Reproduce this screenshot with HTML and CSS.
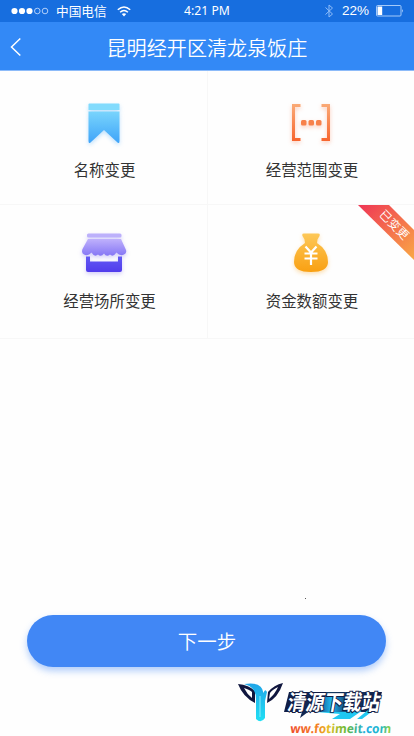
FILE: index.html
```html
<!DOCTYPE html>
<html lang="zh-CN">
<head>
<meta charset="utf-8">
<meta name="viewport" content="width=device-width, initial-scale=1">
<title>昆明经开区清龙泉饭庄</title>
<link rel="stylesheet" href="styles.css">
</head>
<body>
<div class="screen">
  <div class="status">
    <div class="status-left">
      <svg class="signal" width="38" height="8" viewBox="0 0 38 8"><g fill="#fff"><circle cx="3.5" cy="4" r="3.1"/><circle cx="11" cy="4" r="3.1"/><circle cx="18.5" cy="4" r="3.1"/></g><g fill="none" stroke="#d5e6ff" stroke-width=".8"><circle cx="26.3" cy="4" r="2.8"/><circle cx="34" cy="4" r="2.8"/></g></svg>
      <span class="carrier">中国电信</span>
      <svg width="14" height="11" viewBox="0 0 14 11" fill="none" stroke="#fff" stroke-width="1.5"><path d="M.8 3.8Q7-1.900 13.2 3.8M3.1 6.3Q7 2.800 10.9 6.3"/><path d="M4.8 8.1Q7 6.5 9.2 8.1L7 10.5Z" fill="#fff" stroke="none"/></svg>
    </div>
    <span class="time">4:21 PM</span>
    <div class="status-right">
      <svg width="8" height="14" viewBox="0 0 8 14" fill="none" stroke="#8fbcf8" stroke-width="1"><path d="M.5 3.5l7 6.500L4 13V1l3.500 3-7 6.500"/></svg>
      <span class="percent">22%</span>
      <svg width="28" height="12" viewBox="0 0 28 12"><rect x=".5" y=".5" width="24.500" height="10.500" rx="1" fill="none" stroke="#a4cafa"/><path d="M1.500 1.500h4.700v8.500H1.500z" fill="#fff"/><path d="M26 4q1.600 1.700 0 3.700z" fill="#d5e6ff"/></svg>
    </div>
  </div>
  <header class="header">
    <svg class="back" width="12" height="20" viewBox="0 0 12 20" fill="none" stroke="#fff" stroke-width="1.500"><path d="M10.300 1.500L1.500 10l8.800 8.500"/></svg>
    <h1>昆明经开区清龙泉饭庄</h1>
  </header>
  <main class="grid">
    <div class="cell">
      <svg class="icon blue" width="48" height="48" viewBox="0 0 48 48"><defs><linearGradient id="blue" x2="0" y2="1"><stop stop-color="#79d4fc"/><stop offset="1" stop-color="#3fa4f9"/></linearGradient></defs><path d="M9.500 3.500h29q1 0 1 1v5.500h-31V4.500q0-1 1-1z" fill="#82dbfd"/><path d="M8.500 11.500h31v29.500q0 3-2 1.500L24 30 10.500 42.500q-2 1.500-2-1.500z" fill="url(#blue)"/></svg>
      <span class="label">名称变更</span>
    </div>
    <div class="cell right">
      <svg class="icon orange" width="48" height="48" viewBox="0 0 48 48"><defs><linearGradient id="orange" gradientUnits="userSpaceOnUse" x1="0" y1="4" x2="0" y2="42"><stop stop-color="#faaa76"/><stop offset="1" stop-color="#f7642d"/></linearGradient></defs><path d="M13.500 5.500H6.500v34h7M34.500 5.500h7v34h-7" fill="none" stroke="url(#orange)" stroke-width="3"/><g fill="#f7814b"><rect x="14" y="20" width="5.500" height="5.500" rx="1.500"/><rect x="21.500" y="20" width="5.500" height="5.500" rx="1.500"/><rect x="29" y="20" width="5.500" height="5.500" rx="1.500"/></g></svg>
      <span class="label">经营范围变更</span>
    </div>
    <div class="cell lower place">
      <svg class="icon purple" width="48" height="48" viewBox="0 0 48 48"><defs><linearGradient id="violet" x2="0" y2="1"><stop stop-color="#bfb1fc"/><stop offset="1" stop-color="#8576f5"/></linearGradient><linearGradient id="indigo" x2="0" y2="1"><stop stop-color="#6259f4"/><stop offset="1" stop-color="#513cec"/></linearGradient></defs><rect x="7" y="2.500" width="34.500" height="4" rx="1.500" fill="#bcb0fb"/><path d="M8 8h33l5 11q1 3-2 4.500-4 2-7.500-2-3.500 5-6.500 2-3.500 3-6-1-3 4-6 1-3.500 3-6.500-2-3.500 4-7.500 2Q1 22 2.500 18z" fill="url(#violet)"/><path d="M6 25.500h4v5h28v-5h4v13.500q0 2-2 2H8q-2 0-2-2z" fill="url(#indigo)"/></svg>
      <span class="label">经营场所变更</span>
    </div>
    <div class="cell right lower">
      <svg class="icon gold" width="48" height="48" viewBox="0 0 48 48"><defs><linearGradient id="gold" x2="0" y2="1"><stop stop-color="#fdc858"/><stop offset="1" stop-color="#f9a012"/></linearGradient></defs><path d="M17 2.500h14q2.500 0 1.500 2.500L30.500 8.500 30 12Q41 19 41 31 41 41 24 41T7 31Q7 19 18 12L17.500 8.500 15.500 5Q14.500 2.500 17 2.500z" fill="url(#gold)"/><path d="M18.500 15.500l5.500 6 5.500-6M17.500 22.500h13M17.500 27.500h13M24 21v13" fill="none" stroke="#fff" stroke-width="2.200"/></svg>
      <span class="label">资金数额变更</span>
      <svg class="ribbon" width="56" height="56" viewBox="0 0 56 56"><defs><linearGradient id="ribbon" x2="1" y2="1"><stop stop-color="#ef3655"/><stop offset="1" stop-color="#f9a845"/></linearGradient></defs><path d="M0 0h31l25 25v30z" fill="url(#ribbon)"/><text transform="translate(36.500 19.500) rotate(45)" text-anchor="middle" y="4.500" fill="#fff">已变更</text></svg>
    </div>
  </main>
  <i class="speck"></i>
  <button class="next">下一步</button>
  <svg class="watermark" width="184" height="66" viewBox="0 0 184 66"><defs><linearGradient id="rainbow"><stop stop-color="#ef4c2b"/><stop offset=".25" stop-color="#f47b25"/><stop offset=".38" stop-color="#e5bd24"/><stop offset=".55" stop-color="#68ba36"/><stop offset=".75" stop-color="#20ade4"/><stop offset=".9" stop-color="#22b8c5"/><stop offset="1" stop-color="#a5d62d"/></linearGradient><linearGradient id="cyan" x2="0" y2="1"><stop stop-color="#20a5e8"/><stop offset="1" stop-color="#20e0f4"/></linearGradient><linearGradient id="plate"><stop stop-color="#101c44"/><stop offset=".3" stop-color="#102b58"/><stop offset=".48" stop-color="#20b5ef"/><stop offset=".65" stop-color="#123a68"/><stop offset="1" stop-color="#101c44"/></linearGradient></defs>
    <path d="M8 14Q19 15 25 21V33Q13 27 8 14zM53 13Q44 15 38 22L37 33Q48 28 53 13z" fill="#10163e"/>
    <path d="M14 18q6 2 8 4v6q-5-4-8-10zM48 17q-6 3-8 6l-1 6q6-5 9-12z" fill="#fff"/>
    <path d="M14 14Q32 11 33.500 23q1.500-5 3.500-1l-2 9v17q-4 6-9 1V29Q26 17 14 14z" fill="url(#cyan)"/>
    <path d="M30 26v21" stroke="#8beafb" stroke-width="1"/>
    <path d="M59 22h93l-6 20H78l-8 6 2-6H54z" fill="url(#plate)"/>
    <path d="M86 42h30l17-2-13 9h-18l8-5zM127 49l11-9h6l-12 9z" fill="#20c8f2"/>
    <text class="wm-name" transform="translate(56.500 39.500) skewX(-10) scale(.86 1)">清源下载站</text>
    <text class="wm-url" transform="translate(60 63) skewX(-5)" textLength="101" lengthAdjust="spacingAndGlyphs" fill="url(#rainbow)">ww.fotimeit.com</text>
  </svg>
</div>
</body>
</html>
```
FILE: styles.css
```css
* { box-sizing: border-box; }
body { margin: 0; background: #fff; font-family: "Noto Sans", "Noto Sans CJK SC", sans-serif; }
.screen { position: relative; width: 414px; height: 736px; overflow: hidden; display: flex; flex-direction: column; background: #fefefe; }
.status { height: 22px; flex: none; display: grid; grid-template-columns: 1fr auto 1fr; align-items: center; padding: 0 10px 0 11px; background: #176edf; color: #fff; font-size: 12px; line-height: 22px; }
.status-left, .status-right { display: flex; align-items: center; }
.carrier { margin: -1px 10px 0 7px; font: 12.700px/22px "Noto Sans CJK SC", sans-serif; }
.time { margin-left: -1px; font: 12.200px/22px "Noto Sans", sans-serif; }
.status-right { justify-content: flex-end; }
.percent { margin: 0 7px 0 9px; font: 13.500px/22px "Liberation Sans", sans-serif; }
.header { height: 49px; flex: none; display: grid; grid-template-columns: 40px 1fr 40px; align-items: center; background: #3389f6; border-bottom: 1px solid #8dbbf9; color: #fff; }
.back { margin-left: 10px; margin-top: 2px; }
h1 { margin: 3px 0 0; text-align: center; font: 350 20.100px/28px "Noto Sans CJK SC", sans-serif; white-space: nowrap; }
.grid { flex: none; display: grid; grid-template-columns: 208px 206px; grid-template-rows: 134px 134px; }
.cell { position: relative; display: flex; flex-direction: column; align-items: center; padding-top: 29px; border-right: 1px solid #f7f7f7; border-bottom: 1px solid #f7f7f7; }
.right { border-right: 0; }
.lower { padding-top: 26px; }
.label { margin-top: 9px; color: #333; font: 15.400px/24px "Noto Sans CJK SC", sans-serif; transform: translateX(1px); }
.icon { flex: none; }
.blue { filter: drop-shadow(0 2px 2px #3ea5fa55); }
.orange { filter: drop-shadow(0 2px 2px #f7642d55); }
.purple { filter: drop-shadow(0 2px 2px #513cec40); }
.gold { filter: drop-shadow(0 2px 2px #f9a01255); }
.place .label { transform: translateX(6px); }
.ribbon { position: absolute; top: 0; right: 0; font: 350 12px "Noto Sans CJK SC", sans-serif; }
.speck { position: absolute; left: 305px; top: 598px; width: 1px; height: 1px; background: #555; }
.next { flex: none; width: 359px; height: 52px; margin: auto auto 69px 27.400px; padding: 0; border: 0; border-radius: 26px; background: #4187f5; color: #fff; box-shadow: 0 4px 7px #4187f566; font: 350 19.500px/52px "Noto Sans CJK SC", sans-serif; }
.watermark { position: absolute; left: 230px; top: 670px; }
.wm-name { font: 700 21.500px "Noto Sans CJK SC", sans-serif; fill: #fff; stroke: #101c44; stroke-width: 2px; paint-order: stroke; }
.wm-url { font: 700 12.500px "Open Sans", sans-serif; }
```
